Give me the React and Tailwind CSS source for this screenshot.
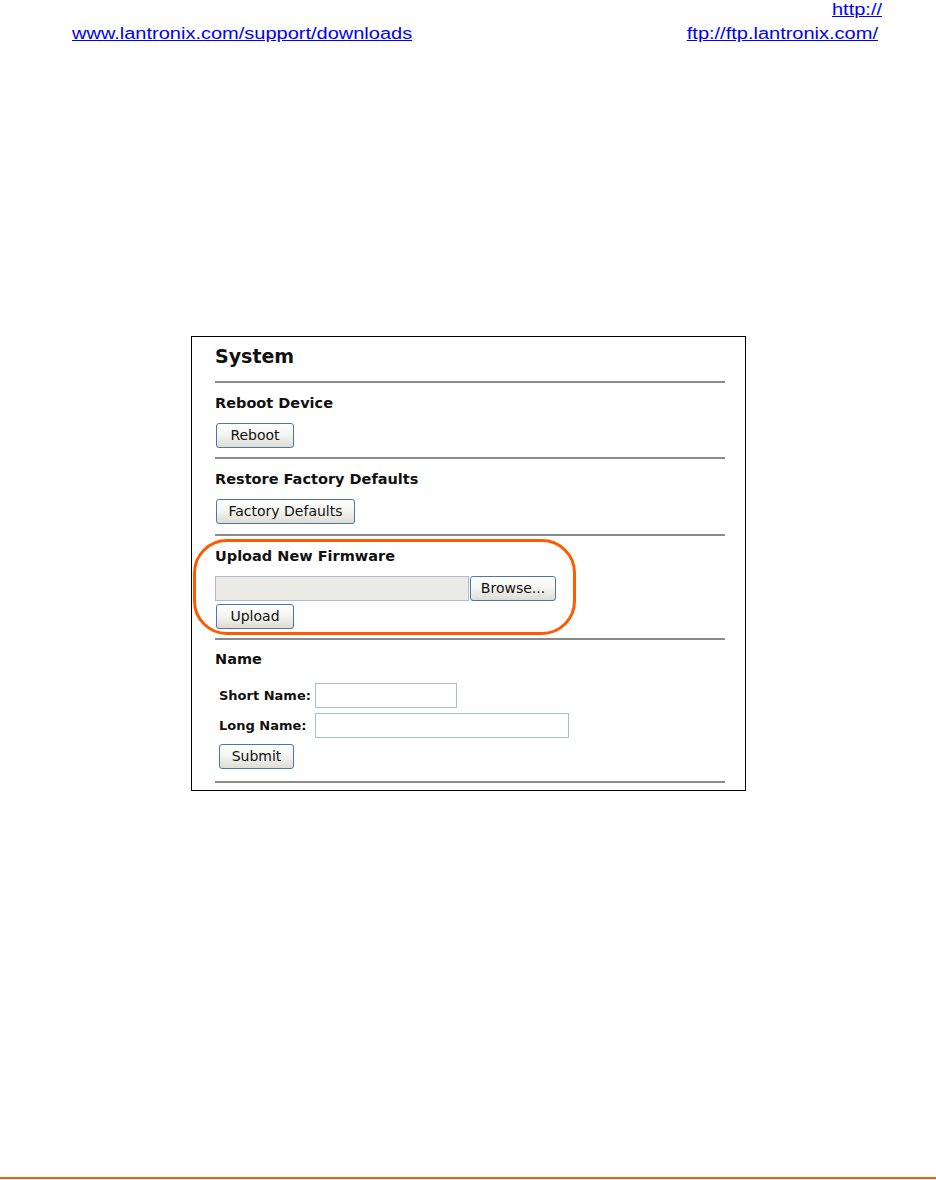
import React from "react";

const Btn = ({ w, className = "", children }) => (
  <div
    className={`flex h-[25px] items-center justify-center rounded-[3px] border border-[#4a76a8] bg-linear-to-b from-white via-[#f3f3ef] to-[#dedcd3] text-[14px] text-[#111] ${w} ${className}`}
  >
    {children}
  </div>
);

const Rule = ({ mt }) => <div className={`h-[2px] w-[510px] bg-[#8a8a8a] ${mt}`} />;

const App = () => {
  return (
    <div className="flex h-[1180px] flex-col bg-white font-['Liberation_Sans',Arial,sans-serif]">
      {/* links at the top */}
      <div className="flex h-5 justify-end pr-[54px] text-[16px] leading-5">
        <span className="inline-block origin-right scale-x-125 text-[#0000ff] underline">http://</span>
      </div>
      <div className="mt-1 flex h-5 justify-between pl-[72px] pr-[58px] text-[16px] leading-5">
        <span className="inline-block origin-left scale-x-125 text-[#0000ff] underline">
          www.lantronix.com/support/downloads
        </span>
        <span className="inline-block origin-right scale-x-125 text-[#0000ff] underline">
          ftp://ftp.lantronix.com/
        </span>
      </div>

      {/* screenshot of the System page */}
      <div className="relative ml-[191px] mt-[292px] w-[555px] border border-black pb-[7px] pl-[23px] pr-[20px] pt-[7px] font-['DejaVu_Sans',sans-serif] text-[#111]">
        <h1 className="text-[19px] font-bold leading-6">System</h1>
        <Rule mt="mt-[13px]" />

        <h2 className="mt-[11px] text-[14.5px] font-bold leading-[18px]">Reboot Device</h2>
        <Btn w="w-[78px]" className="ml-px mt-[11px]">Reboot</Btn>
        <Rule mt="mt-[9px]" />

        <h2 className="mt-[11px] text-[14.5px] font-bold leading-[18px]">Restore Factory Defaults</h2>
        <Btn w="w-[139px]" className="ml-px mt-[11px]">Factory Defaults</Btn>
        <Rule mt="mt-[10px]" />

        <h2 className="mt-[11px] text-[14.5px] font-bold leading-[18px]">Upload New Firmware</h2>
        <div className="mt-[11px] flex">
          <div className="h-[25px] w-[254px] border border-[#a9bcd0] bg-[#ebeae4]" />
          <Btn w="w-[86px]" className="ml-px">Browse...</Btn>
        </div>
        <Btn w="w-[78px]" className="ml-px mt-[3px]">Upload</Btn>
        <Rule mt="mt-[9px]" />

        <h2 className="mt-[10px] text-[14.5px] font-bold leading-[18px]">Name</h2>
        <div className="mt-[15px] pl-[4px]">
          <div className="flex items-center">
            <span className="w-[96px] text-[13px] font-bold">Short Name:</span>
            <div className="h-[25px] w-[142px] border border-[#a5bcd6] bg-white" />
          </div>
          <div className="mt-[5px] flex items-center">
            <span className="w-[96px] text-[13px] font-bold">Long Name:</span>
            <div className="h-[25px] w-[254px] border border-[#a5bcd6] bg-white" />
          </div>
          <Btn w="w-[75px]" className="mt-[6px]">Submit</Btn>
        </div>
        <Rule mt="mt-[12px]" />

        {/* orange highlight around the firmware block */}
        <div className="pointer-events-none absolute left-px top-[202px] h-[96px] w-[383px] rounded-[34px] border-[3px] border-[#ff5a00]" />
      </div>

      <div className="mb-px mt-auto h-[2px] bg-[#ff5a00]" />
    </div>
  );
};

export default App;
